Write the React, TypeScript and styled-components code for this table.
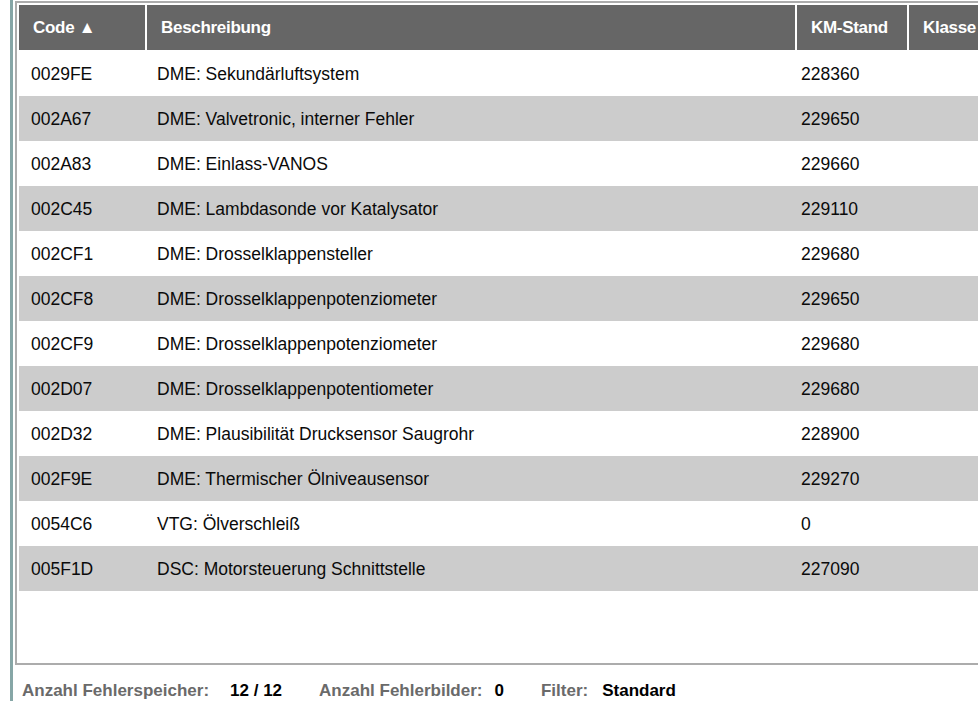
import React from "react";
import styled, { createGlobalStyle } from "styled-components";

const GlobalStyle = createGlobalStyle`
  html, body {
    margin: 0;
    padding: 0;
    background: #ffffff;
    overflow: hidden;
  }

  body {
    font-family: "Liberation Sans", Arial, sans-serif;
    color: #000000;
  }
`;

const Page = styled.div`
  padding-left: 10px;
  width: 978px;
  box-sizing: border-box;
  overflow: hidden;
`;

const Frame = styled.div`
  border-left: 3px solid #86a6a6;
  padding-left: 2px;
  height: 701px;
  box-sizing: border-box;
  display: flex;
  flex-direction: column;
  overflow: hidden;
`;

const Panel = styled.section`
  margin-top: 1px;
  height: 664px;
  box-sizing: border-box;
  border: 2px solid #acacac;
  border-right: none;
  padding: 2px 0 2px 2px;
  display: flex;
  flex-direction: column;
  gap: 1px;
  overflow: hidden;
`;

const Row = styled.div<{ $head?: boolean; $shade?: boolean }>`
  display: grid;
  grid-template-columns: 126px 648px 110px 1fr;
  column-gap: 2px;
  height: 45px;
  align-items: center;
  background: ${(p) => (p.$shade ? "#cccccc" : "#ffffff")};
  ${(p) => p.$head && "background: #ffffff;"}
`;

const HeadCell = styled.div`
  height: 100%;
  display: flex;
  align-items: center;
  padding-left: 14px;
  background: #666666;
  color: #ffffff;
  font-weight: bold;
  font-size: 17px;
  letter-spacing: -0.3px;
  white-space: nowrap;
  overflow: hidden;
`;

const Cell = styled.div<{ $pad: number }>`
  padding: 2px 0 0 ${(p) => p.$pad}px;
  font-size: 17.5px;
  white-space: nowrap;
  color: #0a0a0a;
`;

const Body = styled.div`
  display: flex;
  flex-direction: column;
`;

const Footer = styled.footer`
  display: flex;
  align-items: center;
  padding: 16px 0 0 7px;
  font-size: 17px;
  font-weight: bold;
  white-space: nowrap;
`;

const Label = styled.span`
  color: #6a6a6a;
`;

const Value = styled.span<{ $gap: number }>`
  color: #000000;
  margin-left: ${(p) => p.$gap}px;
  margin-right: 37px;
`;

const faults: [string, string, string][] = [
  ["0029FE", "DME: Sekundärluftsystem", "228360"],
  ["002A67", "DME: Valvetronic, interner Fehler", "229650"],
  ["002A83", "DME: Einlass-VANOS", "229660"],
  ["002C45", "DME: Lambdasonde vor Katalysator", "229110"],
  ["002CF1", "DME: Drosselklappensteller", "229680"],
  ["002CF8", "DME: Drosselklappenpotenziometer", "229650"],
  ["002CF9", "DME: Drosselklappenpotenziometer", "229680"],
  ["002D07", "DME: Drosselklappenpotentiometer", "229680"],
  ["002D32", "DME: Plausibilität Drucksensor Saugrohr", "228900"],
  ["002F9E", "DME: Thermischer Ölniveausensor", "229270"],
  ["0054C6", "VTG: Ölverschleiß", "0"],
  ["005F1D", "DSC: Motorsteuerung Schnittstelle", "227090"],
];

const App: React.FC = () => {
  return (
    <Page>
      <GlobalStyle />
      <Frame>
        <Panel>
          <Row $head>
            <HeadCell>Code ▲</HeadCell>
            <HeadCell>Beschreibung</HeadCell>
            <HeadCell>KM-Stand</HeadCell>
            <HeadCell>Klasse</HeadCell>
          </Row>
          <Body>
            {faults.map(([code, text, km], index) => (
              <Row key={code} $shade={index % 2 === 1}>
                <Cell $pad={12}>{code}</Cell>
                <Cell $pad={10}>{text}</Cell>
                <Cell $pad={4}>{km}</Cell>
                <Cell $pad={10}></Cell>
              </Row>
            ))}
          </Body>
        </Panel>
        <Footer>
          <Label>Anzahl Fehlerspeicher:</Label>
          <Value $gap={21}>12 / 12</Value>
          <Label>Anzahl Fehlerbilder:</Label>
          <Value $gap={12}>0</Value>
          <Label>Filter:</Label>
          <Value $gap={14}>Standard</Value>
        </Footer>
      </Frame>
    </Page>
  );
};

export default App;
